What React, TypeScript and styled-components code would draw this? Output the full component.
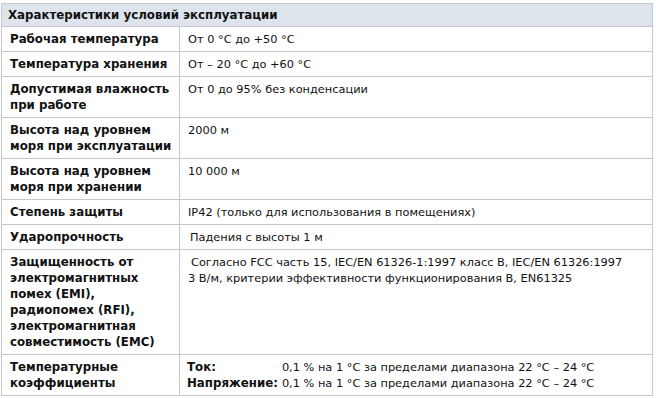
import React from 'react';
import styled, { createGlobalStyle } from 'styled-components';

const GlobalStyle = createGlobalStyle`
  body {
    margin: 0;
    background: #fff;
    font-family: "DejaVu Sans", Verdana, sans-serif;
    color: #111;
  }
`;

const SpecTable = styled.table`
  margin: 3px 0 0 1px;
  width: 652px;
  border-collapse: collapse;
  font-size: 11.35px;
  line-height: 16px;
  table-layout: fixed;
`;

const NameCol = styled.col`
  width: 178px;
`;

const HeaderCell = styled.th`
  background: #dde4ec;
  border: 1px solid #c4c8cc;
  padding: 3px 7px 3px 6px;
  text-align: left;
  font-weight: bold;
  font-size: 11.8px;
`;

const NameCell = styled.td`
  border: 1px solid #c4c8cc;
  padding: 4px 4px 4px 8px;
  font-weight: bold;
  font-size: 11.8px;
  vertical-align: top;
`;

const ValueCell = styled.td<{ $indent?: boolean }>`
  border: 1px solid #c4c8cc;
  padding: 4px 4px 4px ${(p) => (p.$indent ? '10px' : '8px')};
  vertical-align: top;
  white-space: nowrap;
`;

const LeadText = styled.span`
  padding-left: 3px;
`;

const CoefGrid = styled.div`
  display: grid;
  grid-template-columns: auto 1fr;
  column-gap: 4px;
  margin-left: -1px;
`;

const CoefLabel = styled.span`
  font-weight: bold;
  font-size: 11.8px;
`;

type Row = { name: React.ReactNode; value: React.ReactNode; indent?: boolean };

const rows: Row[] = [
  { name: 'Рабочая температура', value: 'От 0 °C до +50 °C' },
  { name: 'Температура хранения', value: 'От – 20 °C до +60 °C' },
  { name: <>Допустимая влажность<br />при работе</>, value: 'От 0 до 95% без конденсации' },
  { name: <>Высота над уровнем<br />моря при эксплуатации</>, value: '2000 м' },
  { name: <>Высота над уровнем<br />моря при хранении</>, value: '10 000 м' },
  { name: 'Степень защиты', value: 'IP42 (только для использования в помещениях)' },
  { name: 'Ударопрочность', value: 'Падения с высоты 1 м', indent: true },
  {
    name: (
      <>
        Защищенность от<br />электромагнитных<br />помех (EMI),<br />радиопомех (RFI),
        <br />электромагнитная<br />совместимость (EMC)
      </>
    ),
    value: (
      <>
        <LeadText>Согласно FCC часть 15, IEC/EN 61326-1:1997 класс B, IEC/EN 61326:1997</LeadText>
        <br />3 В/м, критерии эффективности функционирования B, EN61325
      </>
    ),
  },
  {
    name: <>Температурные<br />коэффициенты</>,
    value: (
      <CoefGrid>
        <CoefLabel>Ток:</CoefLabel>
        <span>0,1 % на 1 °C за пределами диапазона 22 °C – 24 °C</span>
        <CoefLabel>Напряжение:</CoefLabel>
        <span>0,1 % на 1 °C за пределами диапазона 22 °C – 24 °C</span>
      </CoefGrid>
    ),
  },
];

const App = () => {
  return (
    <>
      <GlobalStyle />
      <SpecTable>
        <colgroup>
          <NameCol />
          <col />
        </colgroup>
        <thead>
          <tr>
            <HeaderCell colSpan={2}>Характеристики условий эксплуатации</HeaderCell>
          </tr>
        </thead>
        <tbody>
          {rows.map((row, i) => (
            <tr key={i}>
              <NameCell>{row.name}</NameCell>
              <ValueCell $indent={row.indent}>{row.value}</ValueCell>
            </tr>
          ))}
        </tbody>
      </SpecTable>
    </>
  );
};

export default App;
